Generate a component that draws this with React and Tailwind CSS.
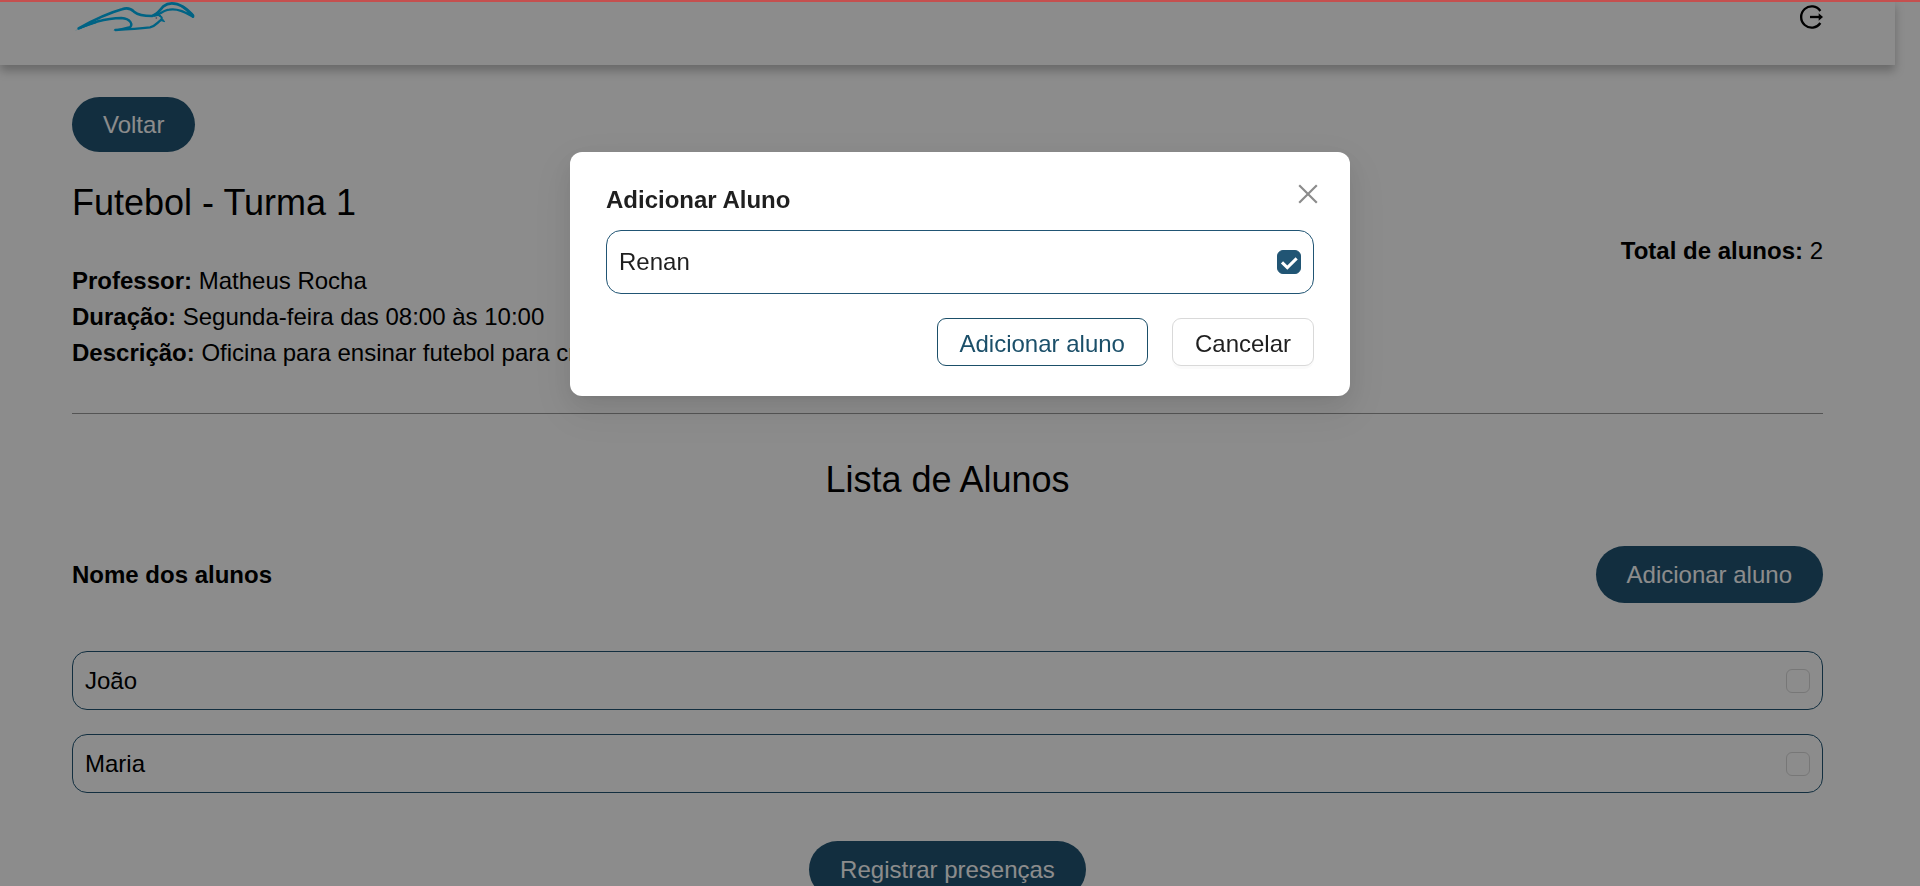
import { useState } from "react";

const pillButton =
  "flex shrink-0 items-center justify-center rounded-full bg-[#215574] px-[31px] text-white";
const dialogButton =
  "flex h-12 items-center rounded-[9px] border bg-white px-[22px] pt-1";

function Logo() {
  return (
    <svg
      className="h-[30px] w-[124px]"
      viewBox="36 6 372 90"
      fill="none"
      stroke="#00b4f0"
      strokeLinecap="round"
      strokeLinejoin="round"
      aria-hidden="true"
    >
      <path
        strokeWidth="8"
        d="M56 85C98 62 142 40 186 28C202 22 212 25 222 35C235 46 252 48 276 48C292 43 299 31 310 19C328 5 350 10 369 20C380 26 388 35 399 46L399 50"
      />
      <path
        strokeWidth="7"
        d="M60 84C77 75 95 69 112 65C140 57 166 54 184 54C212 56 222 74 206 85C193 89 178 89 166 90C200 88 241 85 270 82C286 79 292 67 303 60"
      />
      <path
        strokeWidth="7"
        d="M284 47C298 44 312 30 328 29C354 25 375 37 397 49M367 20C380 28 390 40 398 48"
      />
      <path fill="#00b4f0" strokeWidth="3" d="M294 45C301 44 307 48 307 56L314 65L301 61L304 54Z" />
      <path fill="#00b4f0" stroke="none" d="M44 92L120 58L109 70ZM158 91L206 79L210 88Z" />
      <circle cx="289" cy="54" r="2.5" fill="#8f6f95" stroke="none" />
    </svg>
  );
}

function LogoutIcon() {
  return (
    <svg className="h-[26px] w-6" viewBox="117 12 72 78" fill="none" stroke="#000" aria-hidden="true">
      <path strokeWidth="7" d="M181 33A31.5 32 0 1 0 181 69" />
      <path strokeWidth="7" d="M150 51H180" />
      <path fill="#000" stroke="none" d="M176 40L189 51L176 62Z" />
    </svg>
  );
}

function StudentRow({ id, name, checked, onChange, tall }) {
  return (
    <li
      className={`flex items-center justify-between rounded-[15px] border border-[#215574] px-3 ${
        tall ? "h-16" : "h-[59px]"
      }`}
    >
      <label htmlFor={id} className="grow">
        {name}
      </label>
      <span className="grid size-6">
        <input
          id={id}
          type="checkbox"
          checked={checked}
          onChange={onChange}
          className="col-start-1 row-start-1 size-6 appearance-none rounded-md border border-[#d9d9d9] bg-white checked:border-[#215574] checked:bg-[#215574]"
        />
        {checked && (
          <svg
            className="pointer-events-none col-start-1 row-start-1 size-6"
            viewBox="0 0 72 72"
            fill="none"
            stroke="#fff"
            strokeWidth="9"
            aria-hidden="true"
          >
            <path d="M15 37L31 53L59 25" />
          </svg>
        )}
      </span>
    </li>
  );
}

export default function App() {
  const [present, setPresent] = useState({});
  const [selected, setSelected] = useState(true);
  const [open, setOpen] = useState(true);
  const close = () => setOpen(false);
  const toggle = (name) => setPresent((p) => ({ ...p, [name]: !p[name] }));

  return (
    <div className="h-screen overflow-hidden bg-white pr-[25px] font-['Liberation_Sans',Arial,sans-serif] text-2xl leading-9 text-black">
      <header className="flex h-[65px] items-start justify-between px-[72px] pt-0.5 shadow-[0_6px_9px_rgba(0,0,0,0.25)]">
        <a href="#inicio" aria-label="Início">
          <Logo />
        </a>
        <button type="button" aria-label="Sair" className="pt-0.5">
          <LogoutIcon />
        </button>
      </header>

      <main className="flex flex-col px-[72px] pt-8">
        <button type="button" className={`${pillButton} h-[55px] self-start`}>
          Voltar
        </button>

        <section className="mt-6 flex justify-between border-b border-[#9a9a9a] pb-[42px]">
          <div>
            <h1 className="mb-[33px] text-4xl leading-[54px]">Futebol - Turma 1</h1>
            <p>
              <strong>Professor:</strong> Matheus Rocha
            </p>
            <p>
              <strong>Duração:</strong> Segunda-feira das 08:00 às 10:00
            </p>
            <p>
              <strong>Descrição:</strong> Oficina para ensinar futebol para crianças
            </p>
          </div>
          <p className="pt-[57px]">
            <strong>Total de alunos:</strong> 2
          </p>
        </section>

        <h2 className="mt-[39px] text-center text-4xl leading-[54px]">Lista de Alunos</h2>

        <div className="mt-[39px] flex items-center justify-between">
          <h3 className="font-bold">Nome dos alunos</h3>
          <button type="button" onClick={() => setOpen(true)} className={`${pillButton} h-[57px]`}>
            Adicionar aluno
          </button>
        </div>

        <ul className="mt-12 flex flex-col gap-6">
          {["João", "Maria"].map((name) => (
            <StudentRow
              key={name}
              id={`presenca-${name}`}
              name={name}
              checked={Boolean(present[name])}
              onChange={() => toggle(name)}
            />
          ))}
        </ul>

        <button type="button" className={`${pillButton} mt-12 h-[57px] self-center`}>
          Registrar presenças
        </button>
      </main>

      {open && (
        <div className="fixed inset-0 flex items-start justify-center bg-black/45 pt-[152px]">
          <div
            role="dialog"
            aria-modal="true"
            aria-labelledby="titulo-modal"
            className="w-full max-w-[780px] rounded-xl bg-white px-9 py-[30px] text-[#1f1f1f] shadow-[0_9px_24px_rgba(0,0,0,0.08),0_4px_9px_-6px_rgba(0,0,0,0.12),0_14px_42px_12px_rgba(0,0,0,0.05)]"
          >
            <div className="flex items-start justify-between">
              <h2 id="titulo-modal" className="font-bold">
                Adicionar Aluno
              </h2>
              <button type="button" aria-label="Fechar" onClick={close} className="-mr-1 pt-0.5">
                <svg
                  className="size-[20px]"
                  viewBox="0 0 20 20"
                  fill="none"
                  stroke="#8c8c8c"
                  strokeWidth="2.2"
                  aria-hidden="true"
                >
                  <path d="M1.2 1.2L18.8 18.8M18.8 1.2L1.2 18.8" />
                </svg>
              </button>
            </div>
            <ul className="mt-3">
              <StudentRow
                id="adicionar-renan"
                name="Renan"
                checked={selected}
                onChange={() => setSelected(!selected)}
                tall
              />
            </ul>
            <div className="mt-6 flex justify-end gap-6">
              <button type="button" onClick={close} className={`${dialogButton} border-[#1b4f69] text-[#1b4f69]`}>
                Adicionar aluno
              </button>
              <button
                type="button"
                onClick={close}
                className={`${dialogButton} border-[#d9d9d9] shadow-[0_3px_0_rgba(0,0,0,0.02)]`}
              >
                Cancelar
              </button>
            </div>
          </div>
        </div>
      )}

      <div className="fixed inset-x-0 top-0 h-0.5 bg-[#c5504f]" />
    </div>
  );
}
